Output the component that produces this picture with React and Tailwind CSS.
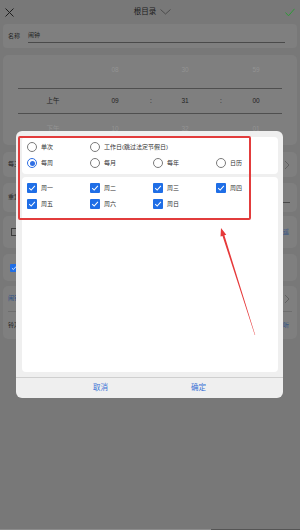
import React from "react";

const F = "font-['Liberation_Sans','Noto_Sans_CJK_SC',sans-serif]";

function Radio({ on }) {
  return (
    <span
      className={`flex h-[10px] w-[10px] shrink-0 items-center justify-center rounded-full border ${
        on ? "border-[#2f6fe4]" : "border-[#7a7a7a]"
      }`}
    >
      {on && <span className="h-[5px] w-[5px] rounded-full bg-[#2f6fe4]" />}
    </span>
  );
}

function Check({ size = 10 }) {
  return (
    <span
      className="flex shrink-0 items-center justify-center rounded-[1px] bg-[#1f6ee6]"
      style={{ width: size, height: size }}
    >
      <svg width={size - 2} height={size - 2} viewBox="0 0 10 10">
        <path d="M1.5 5.2 L4 7.6 L8.6 2.4" fill="none" stroke="#fff" strokeWidth="1.3" />
      </svg>
    </span>
  );
}

function Chevron() {
  return (
    <svg width="6" height="10" viewBox="0 0 6 10">
      <path d="M1 1 L5 5 L1 9" fill="none" stroke="#5e5e5e" strokeWidth="0.9" />
    </svg>
  );
}

export default function App() {
  return (
    <div className={`relative flex h-[530px] w-[300px] flex-col overflow-hidden bg-[#787878] ${F}`}>
      {/* header */}
      <div className="flex h-[24px] shrink-0 items-center justify-between px-[5px]">
        <svg width="9" height="9" viewBox="0 0 9 9">
          <path d="M0.5 0.5 L8.5 8.5 M8.5 0.5 L0.5 8.5" stroke="#1e1e1e" strokeWidth="1" />
        </svg>
        <div className="ml-[6px] flex items-center gap-[4px]">
          <span className="text-[7.5px] text-[#1c1c1c]">根目录</span>
          <svg width="11" height="6" viewBox="0 0 11 6">
            <path d="M0.5 0.5 L5.5 5 L10.5 0.5" fill="none" stroke="#3a3a3a" strokeWidth="0.7" />
          </svg>
        </div>
        <svg width="10" height="9" viewBox="0 0 10 9">
          <path d="M0.5 4.5 L3.5 7.8 L9.5 0.8" fill="none" stroke="#2f9a38" strokeWidth="1" />
        </svg>
      </div>

      {/* name card */}
      <div className="mx-[3px] flex h-[24px] items-center rounded-[4px] bg-[#7f7f7f] pl-[5px] pr-[12px]">
        <span className="text-[6px] text-[#262626]">名称</span>
        <div className="ml-[8px] flex h-[14px] flex-1 items-center border-b border-[#4a4a4a]">
          <span className="text-[6px] text-[#262626]">闹钟</span>
        </div>
      </div>

      {/* picker card */}
      <div className="mx-[3px] mt-[7px] flex h-[90px] flex-col rounded-[5px] bg-[#7f7f7f]">
        <div className="grid h-[30px] grid-cols-[100px_24px_48px_20px_52px_18px] items-center text-center text-[6.5px] text-[#939393]">
          <span></span>
          <span>08</span>
          <span></span>
          <span>30</span>
          <span></span>
          <span>59</span>
        </div>
        <div className="mx-[15px] mt-[3px] h-px bg-[#4f4f4f]" />
        <div className="grid h-[24px] grid-cols-[100px_24px_48px_20px_52px_18px] items-center text-center text-[6.5px] text-[#1e1e1e]">
          <span>上午</span>
          <span>09</span>
          <span>:</span>
          <span>31</span>
          <span>:</span>
          <span>00</span>
        </div>
        <div className="mx-[15px] h-px bg-[#4f4f4f]" />
        <div className="grid h-[30px] grid-cols-[100px_24px_48px_20px_52px_18px] items-center text-center text-[6.5px] text-[#939393]">
          <span>下午</span>
          <span>10</span>
          <span></span>
          <span>32</span>
          <span></span>
          <span>01</span>
        </div>
      </div>

      {/* row card 3 */}
      <div className="mx-[3px] mt-[7px] flex h-[25px] items-center justify-between rounded-[5px] bg-[#7f7f7f] pl-[5px] pr-[7px]">
        <span className="text-[6px] text-[#262626]">每三</span>
        <Chevron />
      </div>

      {/* row card 4 */}
      <div className="mx-[3px] mt-[6px] flex h-[29px] items-center rounded-[5px] bg-[#7f7f7f] pl-[5px] pr-[7px]">
        <span className="text-[6px] text-[#262626]">重复</span>
        <div className="ml-[40px] mt-[10px] h-px flex-1 bg-[#4a4a4a]" />
      </div>

      {/* row card 5 */}
      <div className="mx-[3px] mt-[4px] flex h-[32px] items-center justify-between rounded-[5px] bg-[#7f7f7f] pl-[8px] pr-[8px]">
        <span className="h-[8px] w-[6px] border border-[#3a3a3a]" />
        <span className="text-[6px] text-[#2d4f86]">遥</span>
      </div>

      {/* row card 6 */}
      <div className="mx-[3px] mt-[6px] flex h-[27px] items-center rounded-[5px] bg-[#7f7f7f] pl-[7px]">
        <Check size={8} />
      </div>

      {/* row card 7 */}
      <div className="mx-[3px] mt-[5px] flex h-[53px] flex-col rounded-[5px] bg-[#7f7f7f] px-[5px]">
        <div className="flex h-[25px] items-center justify-between pr-[2px]">
          <span className="text-[6px] text-[#2d4f86]">闹钟铃声</span>
          <Chevron />
        </div>
        <div className="h-px bg-[#6e6e6e]" />
        <div className="flex h-[27px] items-center justify-between pr-[3px]">
          <span className="text-[6px] text-[#262626]">铃声</span>
          <span className="text-[6px] text-[#2d4f86]">试听</span>
        </div>
      </div>

      <div className="mt-auto flex h-px">
        <div className="w-[211px] bg-[#8c8c8c]" />
        <div className="flex-1 bg-[#555555]" />
      </div>

      {/* dialog */}
      <div className="absolute left-[16px] top-[131px] flex h-[267px] w-[267px] flex-col rounded-[6px] bg-[#efefef] pl-[6px] pr-[5px] pt-[6px]">
        <div className="h-[37px] rounded-[4px] bg-white pl-[5px] pt-[2px]">
          <div className="grid h-[16px] grid-cols-[63px_auto] items-center">
            <div className="flex items-center gap-[4px]">
              <Radio />
              <span className="text-[6px] text-[#333]">单次</span>
            </div>
            <div className="flex items-center gap-[4px]">
              <Radio />
              <span className="text-[6px] text-[#333]">工作日(跳过法定节假日)</span>
            </div>
          </div>
          <div className="grid h-[16px] grid-cols-[63px_63px_63px_63px] items-center">
            {[
              ["每周", true],
              ["每月", false],
              ["每年", false],
              ["日历", false],
            ].map(([t, on]) => (
              <div key={t} className="flex items-center gap-[4px]">
                <Radio on={on} />
                <span className="text-[6px] text-[#333]">{t}</span>
              </div>
            ))}
          </div>
        </div>
        <div className="mt-[3px] h-[195px] rounded-[4px] bg-white pl-[5px] pt-[3px]">
          <div className="grid grid-cols-[63px_63px_63px_63px] grid-rows-[16px_16px] items-center">
            {["周一", "周二", "周三", "周四", "周五", "周六", "周日"].map((t) => (
              <div key={t} className="flex items-center gap-[4px]">
                <Check />
                <span className="text-[6px] text-[#333]">{t}</span>
              </div>
            ))}
          </div>
        </div>
        <div className="-ml-[6px] -mr-[5px] mt-[5px] h-px bg-[#cfcfcf]" />
        <div className="-ml-[6px] -mr-[5px] flex h-[20px] items-center text-[7.5px] text-[#3b72d6]">
          <span className="ml-[77px]">取消</span>
          <span className="ml-[83px]">确定</span>
        </div>
      </div>

      {/* red highlight box */}
      <div className="absolute left-[18px] top-[136px] h-[84px] w-[233px] rounded-[2px] border-2 border-[#e23c3c]" />

      {/* arrow */}
      <svg className="absolute left-0 top-0" width="300" height="530" viewBox="0 0 300 530">
        <polygon
          points="221,228 226.3,234.7 224.4,235.3 255.2,335 254.8,335 222.5,235.9 220.5,236.5"
          fill="#e6393a"
        />
      </svg>
    </div>
  );
}
